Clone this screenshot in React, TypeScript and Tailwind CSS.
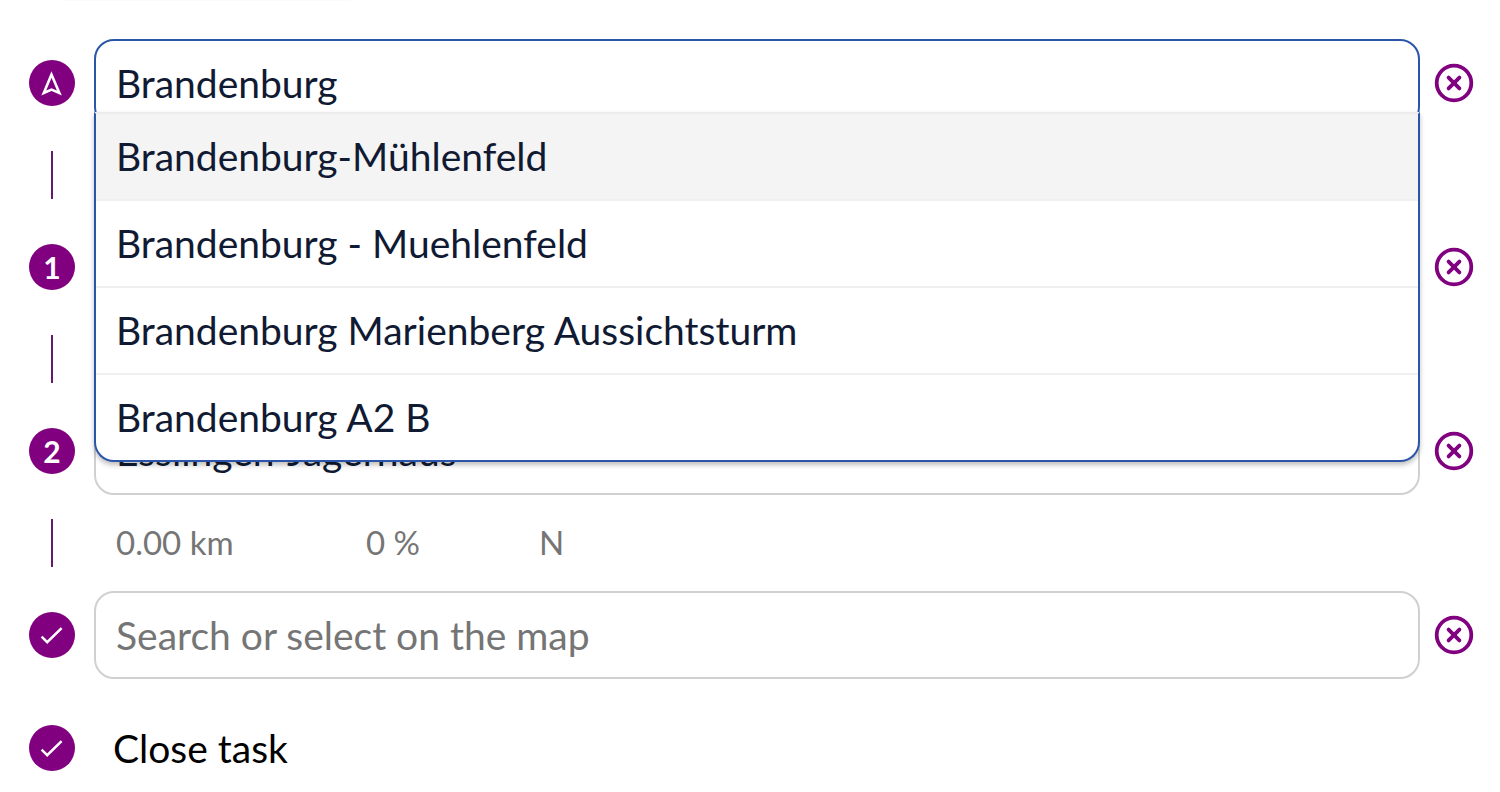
import { Fragment, type ReactNode } from "react";

type Waypoint = {
  id: string;
  label: string;
  marker: ReactNode;
  value?: string;
  leg?: string[];
  suggestions?: string[];
};

const StartIcon = () => (
  <svg viewBox="0 0 46 46" className="size-full" fill="none" stroke="currentColor" strokeWidth="2.6" aria-hidden="true">
    <path d="M22.5 14.5 L14.8 33 L22.5 29.6 L30.4 33 Z" />
  </svg>
);

const CheckIcon = () => (
  <svg viewBox="0 0 46 46" className="size-full" fill="none" stroke="currentColor" strokeWidth="2.5" aria-hidden="true">
    <path d="M12.6 24.6 L18.2 30.2 L32.6 16.2" />
  </svg>
);

const RemoveIcon = () => (
  <svg viewBox="0 0 40 40" className="size-10" fill="none" stroke="currentColor" strokeWidth="3.8" aria-hidden="true">
    <circle cx="20" cy="20" r="17.3" />
    <path d="M14.6 14.6 L25.4 25.4 M25.4 14.6 L14.6 25.4" strokeLinecap="round" />
  </svg>
);

const Marker = ({ children }: { children: ReactNode }) => (
  <span className="flex size-[46px] shrink-0 items-center justify-center rounded-full bg-[#800080] text-[30px] font-bold leading-none text-white">
    {children}
  </span>
);

const waypoints: Waypoint[] = [
  {
    id: "start",
    label: "Start",
    marker: <StartIcon />,
    value: "Brandenburg",
    suggestions: [
      "Brandenburg-Mühlenfeld",
      "Brandenburg - Muehlenfeld",
      "Brandenburg Marienberg Aussichtsturm",
      "Brandenburg A2 B",
    ],
  },
  { id: "turn-1", label: "Turn point 1", marker: "1" },
  {
    id: "turn-2",
    label: "Turn point 2",
    marker: "2",
    value: "Esslingen-Jägerhaus",
    leg: ["0.00 km", "0 %", "N"],
  },
  { id: "finish", label: "Finish", marker: <CheckIcon /> },
];

function Suggestions({ items }: { items: string[] }) {
  return (
    <ul
      role="listbox"
      aria-label="Suggestions"
      className="absolute inset-x-0 top-[73px] z-10 overflow-hidden rounded-b-[20px] border-2 border-[#2b55a8] border-t-[#ededf0] bg-white shadow-[0_3px_5px_rgba(0,0,0,0.25)]"
    >
      {items.map((item, i) => (
        <li
          key={item}
          role="option"
          aria-selected={i === 0}
          className="border-b-2 border-[#f0f0f2] px-5 py-[18px] leading-[49px] last:border-b-0 aria-selected:bg-[#f4f4f4]"
        >
          {item}
        </li>
      ))}
    </ul>
  );
}

export default function App() {
  return (
    <main className="bg-white pb-5 pl-[29px] pr-[26px] font-['Lato',sans-serif] text-[39px] text-[#111a33]">
      <div className="mb-[38px] ml-9 h-px w-[284px] bg-[#fbfbfb]" />
      {waypoints.map((point, i) => (
        <Fragment key={point.id}>
          <div className="flex items-center">
            <Marker>{point.marker}</Marker>
            <div className="relative ml-[19px] mr-[14px] min-w-0 flex-1">
              <input
                type="text"
                aria-label={point.label}
                placeholder="Search or select on the map"
                defaultValue={point.value}
                className={
                  point.suggestions
                    ? "block h-[88px] w-full rounded-[20px] border-2 border-[#2b55a8] bg-white px-5 outline-none placeholder:text-[#757575]"
                    : "block h-[88px] w-full rounded-[20px] border-2 border-[#d0d0d0] bg-white px-5 outline-none placeholder:text-[#757575]"
                }
              />
              {point.suggestions && <Suggestions items={point.suggestions} />}
            </div>
            <button type="button" aria-label={`Remove ${point.label}`} className="shrink-0 text-[#800080]">
              <RemoveIcon />
            </button>
          </div>
          {i < waypoints.length - 1 && (
            <div className="flex h-24 items-center">
              <div className="flex w-[46px] justify-center">
                <span className="h-12 w-0.5 bg-[#651c68]" />
              </div>
              {point.leg && (
                <dl className="ml-[41px] grid grid-cols-[250px_173px_auto] text-[33px] text-[#757575]">
                  {point.leg.map((entry) => (
                    <dd key={entry}>{entry}</dd>
                  ))}
                </dl>
              )}
            </div>
          )}
        </Fragment>
      ))}
      <button type="button" className="mt-10 flex items-center gap-[38px] text-black">
        <Marker>
          <CheckIcon />
        </Marker>
        Close task
      </button>
    </main>
  );
}
